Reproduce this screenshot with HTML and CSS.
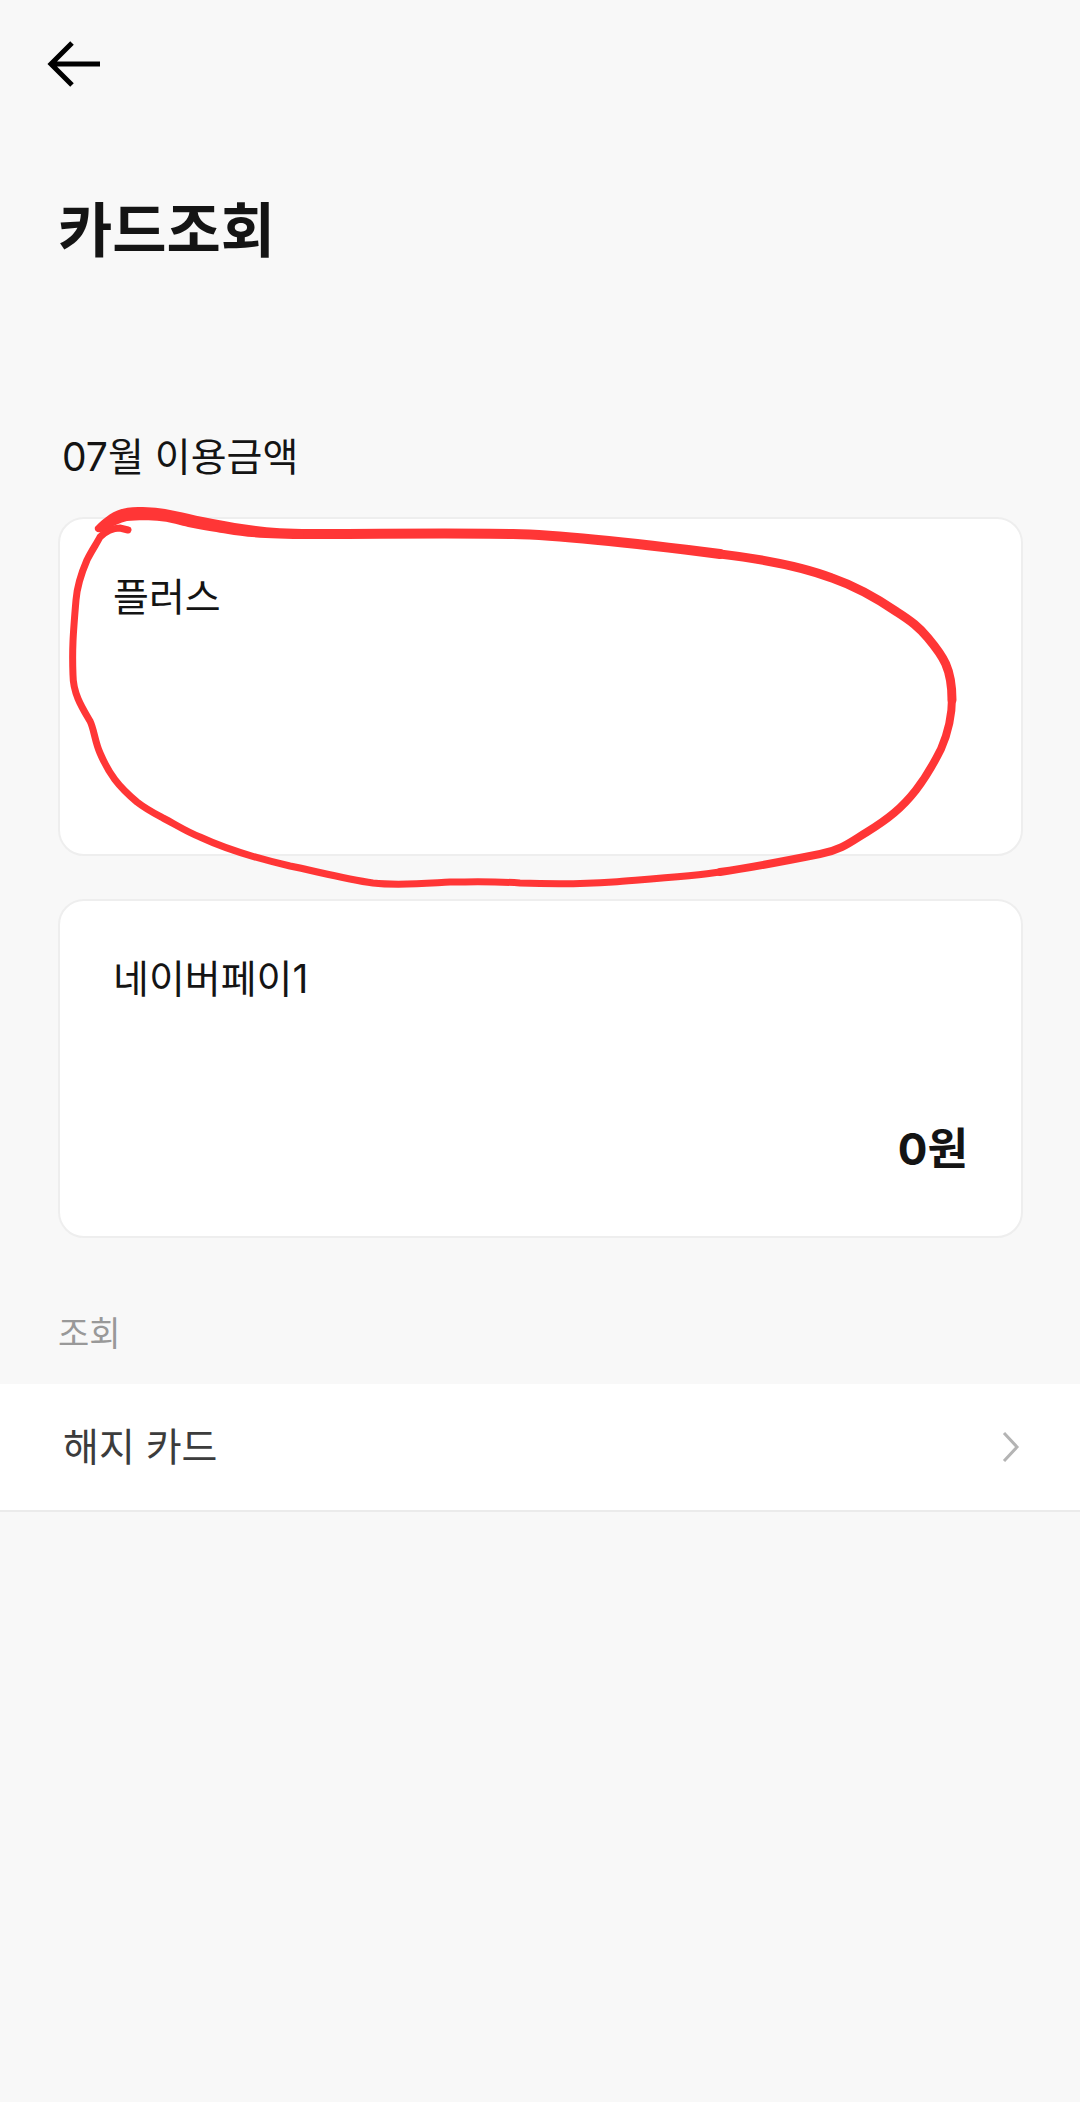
FILE: index.html
```html
<!DOCTYPE html>
<html lang="ko">
<head>
    <meta charset="UTF-8">
    <meta name="viewport" content="width=device-width, initial-scale=1.0">
    <title>카드조회</title>
    <link rel="stylesheet" href="styles.css">
</head>
<body>

    <header class="topbar">
        <button class="back" type="button" aria-label="뒤로">
            <svg width="64" height="56" viewBox="0 0 64 56" fill="none" stroke="#000" stroke-width="5">
                <path d="M32 7L11 28L32 49M11 28H60" />
            </svg>
        </button>
    </header>

    <main>
        <h1>카드조회</h1>

        <section class="usage">
            <h2>07월 이용금액</h2>

            <div class="card">
                <p class="name">플러스</p>
                <!-- pen mark round the first card -->
                <svg class="mark" width="900" height="400" viewBox="60 500 900 400" fill="none" stroke="#ff3636" stroke-linecap="round" aria-hidden="true">
                    <path fill="#ff3636" stroke="none" d="M95 527C108 514 118 507 138 507C168 507 180 513 213 519C245 525 270 529 310 529V539C270 539 245 537 228 534C205 530 195 529 180 525C160 519 140 520 127 521C112 525 108 530 101 532C96 533 94 530 95 527Z" />
                    <path stroke-width="10" d="M308 534C380 534 450 533 513 534C560 535 650 545 720 554" />
                    <path stroke-width="9" d="M720 554C762 559 803 567 832 578C858 587 878 599 897 612C911 621 919 627 928 638C943 656 952 668 952 700" />
                    <path stroke-width="8" d="M952 698C952 718 948 733 941 749C934 763 926 777 916 790C902 808 888 819 867 832C852 841 842 850 820 854C790 860 755 867 720 872" />
                    <path stroke-width="7" d="M720 872C695 876 650 879 613 882C585 884 545 884 520 883C490 881 470 882 450 882C430 883 400 886 373 883C345 879 315 871 290 866C255 858 228 850 200 837C185 831 175 824 163 818C150 811 146 809 137 802C118 786 109 774 100 753C95 742 94 729 90 721C83 709 73 694 73 675C72 650 73 635 76 600C77 587 81 574 87 560C92 550 97 543 100 537C105 532 113 528 120 528L128 530" />
                </svg>
            </div>

            <div class="card">
                <p class="name">네이버페이1</p>
                <p class="amount">0원</p>
            </div>
        </section>

        <section class="lookup">
            <h3>조회</h3>
            <a class="row" href="#">
                <span>해지 카드</span>
                <svg width="20" height="32" viewBox="0 0 20 32" fill="none" stroke="#b4b4b4" stroke-width="3">
                    <path d="M4 2L17 16L4 30" />
                </svg>
            </a>
        </section>
    </main>

</body>
</html>
```
FILE: styles.css
```css
* {
    box-sizing: border-box;
}
body {
    margin: 0;
    font-family: Inter, "Noto Sans CJK KR", sans-serif;
    background-color: #f8f8f8;
    color: #141414;
}
h1, h2, h3, p {
    margin: 0;
}
.topbar {
    display: flex;
    height: 128px;
    padding: 0 40px;
    align-items: center;
}
.back {
    display: flex;
    padding: 0;
    border: 0;
    background: none;
}
h1 {
    padding: 63px 58px 0;
    font-size: 59px;
    line-height: 80px;
    font-weight: 700;
}
.usage {
    display: flex;
    flex-direction: column;
    gap: 43px;
    padding: 156px 57px 0 58px;
}
h2 {
    margin-bottom: -13px;
    padding-left: 4px;
    font-size: 39px;
    line-height: 60px;
    font-weight: 400;
}
.card {
    position: relative;
    display: flex;
    flex-direction: column;
    justify-content: space-between;
    min-height: 339px;
    padding: 48px 53px 51px;
    border: 2px solid #eee;
    border-radius: 26px;
    background-color: #fff;
}
.name {
    font-size: 39px;
    line-height: 60px;
}
.amount {
    font-size: 44px;
    line-height: 72px;
    font-weight: 700;
    text-align: right;
}
.mark {
    position: absolute;
    z-index: 1;
    top: -19px;
    left: 0;
}
.lookup {
    padding-top: 66px;
}
h3 {
    padding: 0 58px;
    font-size: 34px;
    line-height: 60px;
    font-weight: 400;
    color: #999;
}
.row {
    display: flex;
    align-items: center;
    justify-content: space-between;
    height: 128px;
    margin-top: 20px;
    padding: 0 60px 0 63px;
    border-bottom: 2px solid #ebebeb;
    background-color: #fff;
    color: #3c3c3c;
    font-size: 39px;
    line-height: 60px;
    text-decoration: none;
}
```
